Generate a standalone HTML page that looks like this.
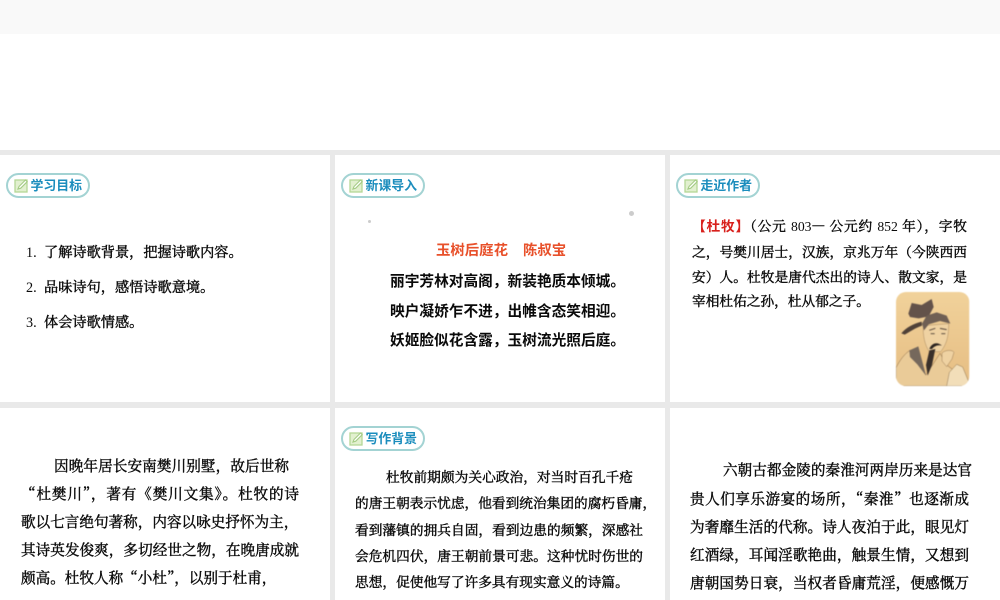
<!DOCTYPE html>
<html lang="zh"><head><meta charset="utf-8"><style>
html,body{margin:0;padding:0;background:#fff;}
#p{position:relative;width:1000px;height:600px;overflow:hidden;background:#fff;}
.b{position:absolute;background:#e9e9e9;}
.l{position:absolute;white-space:nowrap;text-align:justify;text-align-last:justify;color:#0a0a0a;font-family:"Noto Serif CJK SC",serif;font-weight:400;-webkit-text-stroke:0.4px #0a0a0a;height:26px;line-height:26px;}
.l i{font-style:normal;font-family:"Liberation Serif",serif;-webkit-text-stroke:0;}
.c{font-family:"Noto Sans CJK SC",sans-serif;font-weight:700;font-size:14.7px;-webkit-text-stroke:0;}
.pill{position:absolute;width:80px;height:21px;border:2px solid #a3d3d3;border-radius:13px;background:#fff;}
.pill svg{position:absolute;left:6px;top:2.5px;}
.pill span{position:absolute;left:22.5px;top:0;font:700 12.9px/21px "Liberation Sans","Noto Sans CJK SC",sans-serif;color:#1b8dbd;white-space:nowrap;}
</style></head><body><div id="p">
<div class="b" style="left:0;top:0;width:1000px;height:34px;background:#f9f9f9"></div>
<div class="b" style="left:0;top:150px;width:1000px;height:5px"></div>
<div class="b" style="left:0;top:402px;width:1000px;height:6px"></div>
<div class="b" style="left:330px;top:155px;width:5px;height:445px"></div>
<div class="b" style="left:665px;top:155px;width:5px;height:445px"></div>

<div class="pill" style="left:6px;top:173px"><svg width="15" height="15" viewBox="0 0 15 15"><rect x="1" y="2" width="12" height="12" fill="#e2f0cf" stroke="#b5d796" stroke-width="1.3"/><path d="M4 11 L5 8.5 L11.5 2 L13.2 3.7 L6.7 10.2Z" fill="#fff" stroke="#a5cc85" stroke-width="1.1"/></svg><span>学习目标</span></div>
<div class="pill" style="left:341px;top:173px"><svg width="15" height="15" viewBox="0 0 15 15"><rect x="1" y="2" width="12" height="12" fill="#e2f0cf" stroke="#b5d796" stroke-width="1.3"/><path d="M4 11 L5 8.5 L11.5 2 L13.2 3.7 L6.7 10.2Z" fill="#fff" stroke="#a5cc85" stroke-width="1.1"/></svg><span>新课导入</span></div>
<div class="pill" style="left:676px;top:173px"><svg width="15" height="15" viewBox="0 0 15 15"><rect x="1" y="2" width="12" height="12" fill="#e2f0cf" stroke="#b5d796" stroke-width="1.3"/><path d="M4 11 L5 8.5 L11.5 2 L13.2 3.7 L6.7 10.2Z" fill="#fff" stroke="#a5cc85" stroke-width="1.1"/></svg><span>走近作者</span></div>
<div class="pill" style="left:341px;top:426px"><svg width="15" height="15" viewBox="0 0 15 15"><rect x="1" y="2" width="12" height="12" fill="#e2f0cf" stroke="#b5d796" stroke-width="1.3"/><path d="M4 11 L5 8.5 L11.5 2 L13.2 3.7 L6.7 10.2Z" fill="#fff" stroke="#a5cc85" stroke-width="1.1"/></svg><span>写作背景</span></div>

<div class="l" style="left:26px;top:239px;width:217px;font-size:14.2px;text-align-last:left"><i style="display:inline-block;width:18px">1.</i>了解诗歌背景&#xFF0C;把握诗歌内容。</div>
<div class="l" style="left:26px;top:274px;width:190px;font-size:14.2px;text-align-last:left"><i style="display:inline-block;width:18px">2.</i>品味诗句&#xFF0C;感悟诗歌意境。</div>
<div class="l" style="left:26px;top:309px;width:120px;font-size:14.2px;text-align-last:left"><i style="display:inline-block;width:18px">3.</i>体会诗歌情感。</div>

<div style="position:absolute;left:368px;top:220px;width:3px;height:3px;border-radius:50%;background:#ccc"></div>
<div style="position:absolute;left:629px;top:211px;width:5px;height:5px;border-radius:50%;background:#ccc"></div>

<div class="l c" style="left:436px;top:237px;width:130px;color:#e8502a;text-align-last:left;font-size:14.4px">玉树后庭花<span style="display:inline-block;width:15px"></span>陈叔宝</div>
<div class="l c" style="left:390px;top:268px;width:235px;text-align-last:left">丽宇芳林对高阁&#xFF0C;新装艳质本倾城。</div>
<div class="l c" style="left:390px;top:298px;width:235px;text-align-last:left">映户凝娇乍不进&#xFF0C;出帷含态笑相迎。</div>
<div class="l c" style="left:390px;top:327px;width:235px;text-align-last:left">妖姬脸似花含露&#xFF0C;玉树流光照后庭。</div>

<div class="l" style="left:692px;top:212px;width:275px;font-size:13.7px"><span style="color:#d8201c;font-weight:700;-webkit-text-stroke:0;font-family:'Noto Sans CJK SC',sans-serif">【杜牧】</span>&#xFF08;公元 <i>803</i>— 公元约 <i>852</i> 年&#xFF09;&#xFF0C;字牧</div>
<div class="l" style="left:692px;top:238px;width:275px;font-size:13.7px">之&#xFF0C;号樊川居士&#xFF0C;汉族&#xFF0C;京兆万年&#xFF08;今陕西西</div>
<div class="l" style="left:692px;top:263px;width:275px;font-size:13.7px">安&#xFF09;人。杜牧是唐代杰出的诗人、散文家&#xFF0C;是</div>
<div class="l" style="left:692px;top:287px;width:172px;font-size:13.7px;text-align-last:left">宰相杜佑之孙&#xFF0C;杜从郁之子。</div>

<svg style="position:absolute;left:890px;top:285px;filter:blur(.5px)" width="90" height="110" viewBox="0 0 270 330">
<defs><clipPath id="k"><rect x="18" y="21" width="220" height="282" rx="30"/></clipPath><linearGradient id="g" x1="0" y1="0" x2="0" y2="1"><stop offset="0" stop-color="#f1d29b"/><stop offset="1" stop-color="#e6bd82"/></linearGradient></defs>
<g clip-path="url(#k)">
<rect x="18" y="21" width="220" height="282" fill="url(#g)"/>
<path d="M18 248 C30 225 42 208 60 196 L108 270 L150 205 L170 240 L238 290 L238 303 L18 303Z" fill="#eacb98" stroke="#8c6c48" stroke-width="1.5"/>
<path d="M58 196 L85 184 L108 272 L82 238 L60 216Z" fill="#75685c"/>
<path d="M100 122 L176 116 C176 150 172 175 152 200 L118 200 C104 180 98 150 100 122Z" fill="#efd2a2" stroke="#8c6c48" stroke-width="1"/>
<path d="M55 86 L65 54 L95 60 L125 42 L131 66 L116 94 L86 100 L60 96Z" fill="#63524a"/>
<path d="M96 116 L110 92 L140 82 L170 92 L181 116 L150 108 L116 118 L102 136Z" fill="#6f5f54"/>
<path d="M34 145 C48 128 70 116 95 110 L96 122 C78 128 60 140 44 149Z" fill="#4f4138"/>
<path d="M118 192 C124 176 140 168 156 182 C144 178 132 184 126 192Z" fill="#2d2520"/>
<path d="M118 196 L136 192 L126 240 L113 272 L108 240Z" fill="#3a302a"/>
<path d="M118 136 L136 130 M150 130 L170 134" stroke="#5a4a3e" stroke-width="3"/>
<path d="M122 146 L134 146 M154 146 L166 146" stroke="#4a3c32" stroke-width="2.5"/>
<path d="M156 204 C166 194 188 194 192 202 L186 222 L170 245 L156 228Z" fill="#efd2a2" stroke="#8c6c48" stroke-width="1.2"/>
<path d="M178 262 L200 238 L218 246 L236 290 L226 303 L170 303Z" fill="#f2deb9" stroke="#7e6342" stroke-width="1.2"/>
</g></svg>

<div class="l" style="left:54px;top:453px;width:235px;font-size:14.6px">因晚年居长安南樊川别墅&#xFF0C;故后世称</div>
<div class="l" style="left:21px;top:481px;width:278px;font-size:14.6px">“杜樊川”&#xFF0C;著有《樊川文集》。杜牧的诗</div>
<div class="l" style="left:21px;top:509px;width:278px;font-size:14.6px;text-align-last:left">歌以七言绝句著称&#xFF0C;内容以咏史抒怀为主&#xFF0C;</div>
<div class="l" style="left:21px;top:537px;width:278px;font-size:14.6px">其诗英发俊爽&#xFF0C;多切经世之物&#xFF0C;在晚唐成就</div>
<div class="l" style="left:21px;top:565px;width:258px;font-size:14.6px;text-align-last:left">颇高。杜牧人称“小杜”&#xFF0C;以别于杜甫&#xFF0C;</div>
<div class="l" style="left:36px;top:595px;width:200px;font-size:14.6px;text-align-last:left">与李商隐并称“小李杜”。</div>

<div class="l" style="left:386px;top:463px;width:247px;font-size:13.7px">杜牧前期颇为关心政治&#xFF0C;对当时百孔千疮</div>
<div class="l" style="left:355px;top:489px;width:296px;font-size:13.7px;text-align-last:left">的唐王朝表示忧虑&#xFF0C;他看到统治集团的腐朽昏庸&#xFF0C;</div>
<div class="l" style="left:355px;top:516px;width:288px;font-size:13.7px">看到藩镇的拥兵自固&#xFF0C;看到边患的频繁&#xFF0C;深感社</div>
<div class="l" style="left:355px;top:542px;width:288px;font-size:13.7px">会危机四伏&#xFF0C;唐王朝前景可悲。这种忧时伤世的</div>
<div class="l" style="left:355px;top:568px;width:272px;font-size:13.7px;text-align-last:left">思想&#xFF0C;促使他写了许多具有现实意义的诗篇。</div>

<div class="l" style="left:723px;top:457px;width:249px;font-size:14.6px">六朝古都金陵的秦淮河两岸历来是达官</div>
<div class="l" style="left:690px;top:486px;width:279px;font-size:14.6px">贵人们享乐游宴的场所&#xFF0C;“秦淮”也逐渐成</div>
<div class="l" style="left:690px;top:514px;width:279px;font-size:14.6px">为奢靡生活的代称。诗人夜泊于此&#xFF0C;眼见灯</div>
<div class="l" style="left:690px;top:542px;width:279px;font-size:14.6px">红酒绿&#xFF0C;耳闻淫歌艳曲&#xFF0C;触景生情&#xFF0C;又想到</div>
<div class="l" style="left:690px;top:570px;width:279px;font-size:14.6px">唐朝国势日衰&#xFF0C;当权者昏庸荒淫&#xFF0C;便感慨万</div>
</div></body></html>
